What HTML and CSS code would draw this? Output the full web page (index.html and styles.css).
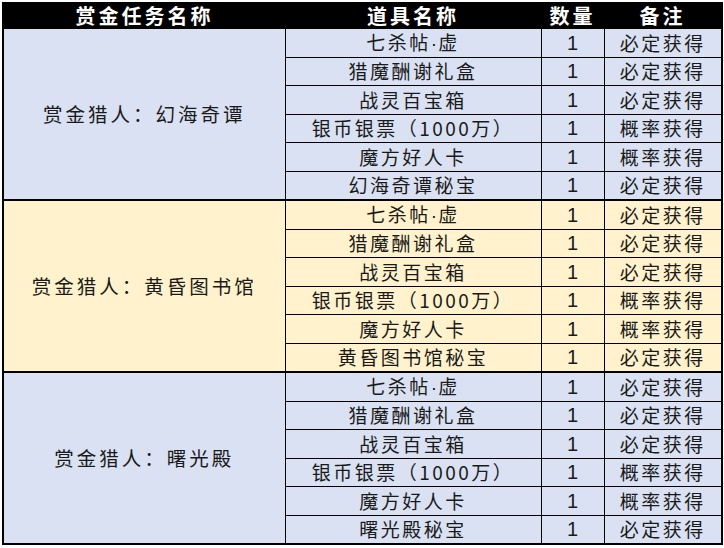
FILE: index.html
```html
<!DOCTYPE html>
<html lang="zh">
<head>
<meta charset="utf-8">
<link rel="stylesheet" href="styles.css">
</head>
<body>
<table class="sheet">
  <colgroup>
    <col class="c-task">
    <col class="c-item">
    <col class="c-qty">
    <col class="c-note">
  </colgroup>
  <thead>
    <tr class="head">
      <th>赏金任务名称</th>
      <th>道具名称</th>
      <th>数量</th>
      <th>备注</th>
    </tr>
  </thead>
  <tbody class="g-blue">
    <tr><td class="task" rowspan="6">赏金猎人：幻海奇谭</td><td>七杀帖<span class="dot">·</span>虚</td><td class="num">1</td><td>必定获得</td></tr>
    <tr><td>猎魔酬谢礼盒</td><td class="num">1</td><td>必定获得</td></tr>
    <tr><td>战灵百宝箱</td><td class="num">1</td><td>必定获得</td></tr>
    <tr><td>银币银票（1000万）</td><td class="num">1</td><td>概率获得</td></tr>
    <tr><td>魔方好人卡</td><td class="num">1</td><td>概率获得</td></tr>
    <tr class="last"><td>幻海奇谭秘宝</td><td class="num">1</td><td>必定获得</td></tr>
  </tbody>
  <tbody class="g-yellow">
    <tr><td class="task" rowspan="6">赏金猎人：黄昏图书馆</td><td>七杀帖<span class="dot">·</span>虚</td><td class="num">1</td><td>必定获得</td></tr>
    <tr><td>猎魔酬谢礼盒</td><td class="num">1</td><td>必定获得</td></tr>
    <tr><td>战灵百宝箱</td><td class="num">1</td><td>必定获得</td></tr>
    <tr><td>银币银票（1000万）</td><td class="num">1</td><td>概率获得</td></tr>
    <tr><td>魔方好人卡</td><td class="num">1</td><td>概率获得</td></tr>
    <tr class="last"><td>黄昏图书馆秘宝</td><td class="num">1</td><td>必定获得</td></tr>
  </tbody>
  <tbody class="g-blue">
    <tr><td class="task" rowspan="6">赏金猎人：曙光殿</td><td>七杀帖<span class="dot">·</span>虚</td><td class="num">1</td><td>必定获得</td></tr>
    <tr><td>猎魔酬谢礼盒</td><td class="num">1</td><td>必定获得</td></tr>
    <tr><td>战灵百宝箱</td><td class="num">1</td><td>必定获得</td></tr>
    <tr><td>银币银票（1000万）</td><td class="num">1</td><td>概率获得</td></tr>
    <tr><td>魔方好人卡</td><td class="num">1</td><td>概率获得</td></tr>
    <tr class="last"><td>曙光殿秘宝</td><td class="num">1</td><td>必定获得</td></tr>
  </tbody>
</table>
</body>
</html>
```

FILE: styles.css
```css
html, body {
  margin: 0;
  padding: 0;
  background: #ffffff;
}

body {
  padding: 2px 0 0 2px;
}

.sheet {
  border-collapse: collapse;
  table-layout: fixed;
  width: 719px;
  font-family: "Noto Sans CJK SC", "Liberation Sans", sans-serif;
  border: 2px solid #000;
}

.c-task { width: 282px; }
.c-item { width: 256px; }
.c-qty  { width: 63px; }
.c-note { width: 118px; }

.head th {
  height: 24px;
  padding: 0;
  background: #000;
  color: #fff;
  font-size: 20px;
  font-weight: 700;
  letter-spacing: 3px;
  line-height: 24px;
  text-align: center;
  border: none;
}

.sheet td {
  height: 27.5px;
  padding: 0;
  font-size: 19px;
  letter-spacing: 2.5px;
  color: #1a1a1a;
  line-height: 20px;
  text-align: center;
  vertical-align: middle;
  border: 1px solid #000;
  white-space: nowrap;
  overflow: hidden;
}

.sheet td .dot {
  font-family: "Liberation Sans", sans-serif;
  letter-spacing: 0;
  margin-right: 1px;
}

.sheet td.num {
  letter-spacing: 0;
  font-family: "Liberation Sans", sans-serif;
  font-size: 20px;
}

.sheet td.task {
  font-size: 19.5px;
  letter-spacing: 3px;
  border-bottom: 2px solid #000;
}

.sheet tr.last td {
  border-bottom: 2px solid #000;
}

.g-blue td { background: #d9e1f2; }
.g-yellow td { background: #fff2cc; }
```
